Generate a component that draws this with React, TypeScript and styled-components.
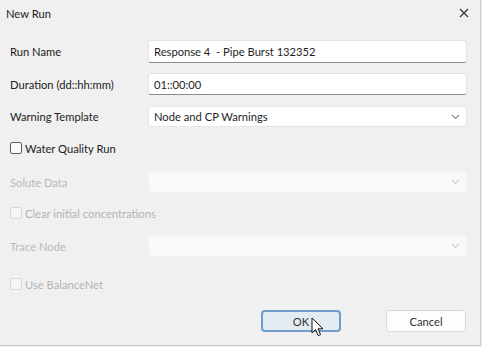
import * as React from 'react';
import styled, { createGlobalStyle } from 'styled-components';

const GlobalStyle = createGlobalStyle`
html, body {
    margin: 0;
    padding: 0;
    background: #f0f0f0;
}
body {
    font-family: Lato, "Noto Sans", sans-serif;
    font-size: 11.2px;
    color: #1e1e1e;
}
`

const Chevron = (props: { disabled?: boolean }) =>
    <svg width="9" height="6" viewBox="0 0 9 6">
        <path d="M1 1 L4.5 4.5 L8 1" fill="none" stroke={props.disabled ? '#cfcfcf' : '#8a8a8a'} strokeWidth="1.1" />
    </svg>;

const Pointer = () =>
    <svg width="14" height="20" viewBox="0 0 14 20">
        <path d="M1 1 L1 16 L4.6 12.6 L7.2 18.6 L9.6 17.6 L7 11.8 L12 11.8 Z" fill="#fff" stroke="#111" strokeWidth="1" strokeLinejoin="round" />
    </svg>;

interface FieldProps {
    label: string;
    top: number;
    height: number;
    disabled?: boolean;
    children?: React.ReactNode;
}

const Field = (props: FieldProps) =>
    <StyledRow $mt={props.top} $h={props.height}>
        <StyledLabel $disabled={props.disabled}>{props.label}</StyledLabel>
        {props.children}
    </StyledRow>;

const Check = (props: { label: string, top: number, disabled?: boolean }) =>
    <StyledCheckRow $mt={props.top} $disabled={props.disabled}>
        <StyledBox $disabled={props.disabled} />
        <span>{props.label}</span>
    </StyledCheckRow>;

const App = () => {
    return <>
        <GlobalStyle />
        <StyledWindow>
            <StyledTitleBar>
                <span>New Run</span>
                <StyledClose>
                    <svg width="10" height="10" viewBox="0 0 10 10">
                        <path d="M1 1 L9 9 M9 1 L1 9" stroke="#333" strokeWidth="1.2" />
                    </svg>
                </StyledClose>
            </StyledTitleBar>

            <StyledForm>
                <Field label="Run Name" top={14} height={23}>
                    <StyledInput>Response 4&nbsp; - Pipe Burst 132352</StyledInput>
                </Field>
                <Field label="Duration (dd::hh:mm)" top={10} height={22}>
                    <StyledInput>01::00:00</StyledInput>
                </Field>
                <Field label="Warning Template" top={11} height={21}>
                    <StyledSelect>
                        <span>Node and CP Warnings</span>
                        <Chevron />
                    </StyledSelect>
                </Field>

                <Check label="Water Quality Run" top={13} />

                <Field label="Solute Data" top={16} height={20} disabled>
                    <StyledSelect $disabled>
                        <span />
                        <Chevron disabled />
                    </StyledSelect>
                </Field>

                <Check label="Clear initial concentrations" top={13} disabled />

                <Field label="Trace Node" top={15} height={20} disabled>
                    <StyledSelect $disabled>
                        <span />
                        <Chevron disabled />
                    </StyledSelect>
                </Field>

                <Check label="Use BalanceNet" top={20} disabled />

                <StyledButtons>
                    <StyledButton $primary>
                        OK
                        <StyledCursor><Pointer /></StyledCursor>
                    </StyledButton>
                    <StyledButton>Cancel</StyledButton>
                </StyledButtons>
            </StyledForm>
        </StyledWindow>
    </>;
}

const StyledWindow = styled.div`
width: 480px;
height: 345px;
border-right: 1px solid #c9c9c9;
border-bottom: 1px solid #c9c9c9;
background: #f0f0f0;
display: flex;
flex-direction: column;
`

const StyledTitleBar = styled.div`
height: 26px;
display: flex;
align-items: center;
justify-content: space-between;
padding: 0 11px 0 6px;
color: #222;
`

const StyledClose = styled.div`
display: flex;
align-items: center;
`

const StyledForm = styled.div`
display: flex;
flex-direction: column;
padding: 0 13px 0 10px;
`

const StyledRow = styled.div<{ $mt: number, $h: number }>`
display: grid;
grid-template-columns: 138px 319px;
align-items: center;
margin-top: ${p => p.$mt}px;
height: ${p => p.$h}px;
`

const StyledLabel = styled.div<{ $disabled?: boolean }>`
color: ${p => p.$disabled ? '#b9b9b9' : '#222'};
`

const StyledInput = styled.div`
height: 100%;
box-sizing: border-box;
background: #fff;
border: 1px solid #e3e3e3;
border-bottom: 1px solid #8c8c8c;
border-radius: 3px;
padding: 0 5px;
display: flex;
align-items: center;
`

const StyledSelect = styled.div<{ $disabled?: boolean }>`
height: 100%;
box-sizing: border-box;
background: ${p => p.$disabled ? '#f9f9f9' : '#fff'};
border: 1px solid ${p => p.$disabled ? '#f4f4f4' : '#e6e6e6'};
border-radius: 3px;
padding: 0 6px 0 5px;
display: flex;
align-items: center;
justify-content: space-between;
`

const StyledCheckRow = styled.div<{ $mt: number, $disabled?: boolean }>`
display: flex;
align-items: center;
gap: 3px;
height: 16px;
margin-top: ${p => p.$mt}px;
color: ${p => p.$disabled ? '#b3b3b3' : '#222'};
`

const StyledBox = styled.div<{ $disabled?: boolean }>`
width: 10px;
height: 10px;
border: 1px solid ${p => p.$disabled ? '#d8d8d8' : '#5a5a5a'};
border-radius: 2px;
background: ${p => p.$disabled ? '#f4f4f4' : '#fafafa'};
`

const StyledButtons = styled.div`
display: flex;
justify-content: flex-end;
gap: 45px;
margin-top: 18px;
padding-right: 1px;
`

const StyledButton = styled.div<{ $primary?: boolean }>`
position: relative;
width: 80px;
height: 22px;
box-sizing: border-box;
display: flex;
align-items: center;
justify-content: center;
border-radius: 4px;
background: ${p => p.$primary ? '#e3ebf3' : '#fdfdfd'};
border: ${p => p.$primary ? '2px solid #6f9cc8' : '1px solid #dadada'};
color: #333;
`

const StyledCursor = styled.div`
position: absolute;
left: 48px;
top: 5px;
`

export default App;
